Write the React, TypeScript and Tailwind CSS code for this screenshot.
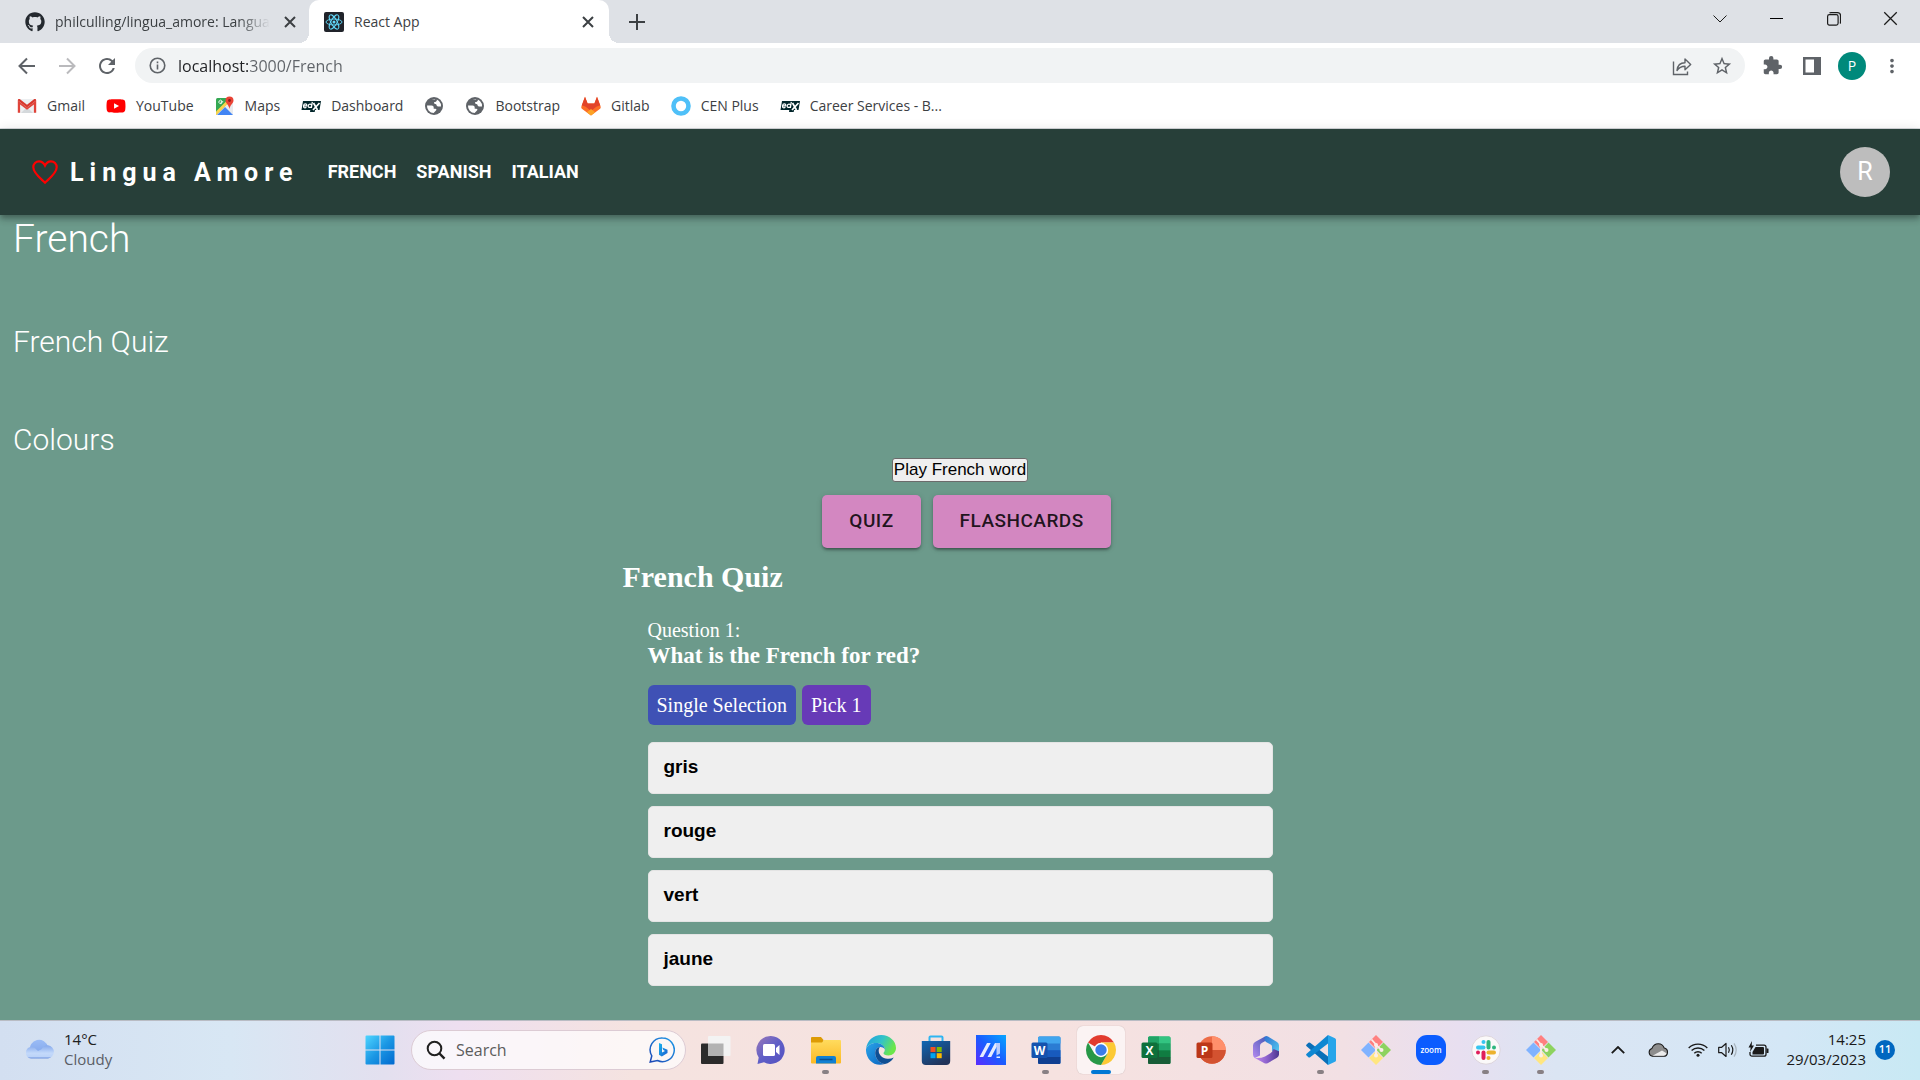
import React from "react";
import { FaGithub, FaYoutube } from "react-icons/fa";
import { MdExtension, MdMoreVert, MdRefresh, MdStarBorder } from "react-icons/md";

/* ---------- Browser icons ---------- */

function ReactLogo() {
  return (
    <svg viewBox="0 0 20 20" className="size-5">
      <rect width="20" height="20" rx="2" fill="#20232a" />
      <g fill="none" stroke="#61dafb" strokeWidth="0.9">
        <ellipse cx="10" cy="10" rx="8" ry="3" />
        <ellipse cx="10" cy="10" rx="8" ry="3" transform="rotate(60 10 10)" />
        <ellipse cx="10" cy="10" rx="8" ry="3" transform="rotate(120 10 10)" />
      </g>
      <circle cx="10" cy="10" r="1.5" fill="#61dafb" />
    </svg>
  );
}

function Cross({ className }: { className: string }) {
  return (
    <svg viewBox="0 0 12 12" className={className} fill="none" stroke="currentColor">
      <path d="M1 1l10 10M11 1L1 11" />
    </svg>
  );
}

function Arrow({ className }: { className: string }) {
  return (
    <svg viewBox="0 0 20 20" className={className} fill="none" stroke="currentColor" strokeWidth="2">
      <path d="M18 10H3M10 2.5L2.5 10l7.5 7.5" />
    </svg>
  );
}

function GmailIcon() {
  return (
    <svg viewBox="0 0 20 20" className="size-5">
      <rect x="1" y="3" width="18" height="14" rx="1.5" fill="#eceff1" />
      <path d="M4 17L10 11l6 6z" fill="#d5d9dc" />
      <path d="M0.8 16.8V4.4L10 11.4l9.200-7v12.400h-2.300V8.500L10 13.700 3.100 8.500v8.300z" fill="#e0443a" />
      <path d="M0.800 4.400C.8 3 2.200 2.700 3 3.300l7 5.500 7-5.500c.8-.6 2.200-.3 2.200 1.100L10 11.400z" fill="#d8372d" />
    </svg>
  );
}

function MapsIcon() {
  return (
    <svg viewBox="0 0 20 20" className="size-5">
      <rect x="1" y="2" width="17" height="17" rx="1.500" fill="#34a853" />
      <path d="M1 19L18 2v17z" fill="#e8eaed" />
      <path d="M2 19l8-8 8 8z" fill="#4285f4" />
      <path d="M1 15.500L12.500 4l2 2L1.500 19H1z" fill="#fbd34d" />
      <path d="M8.200 5.700H6v1h1.100A1.700 1.700 0 1 1 6.800 4.800" fill="none" stroke="#fff" strokeWidth="0.900" />
      <path d="M14.500 0.500a4 4 0 0 1 4 4c0 3-3.300 4-4 8.500-.7-4.500-4-5.500-4-8.500a4 4 0 0 1 4-4z" fill="#ea4335" />
      <circle cx="14.500" cy="4.500" r="1.400" fill="#8c1d18" />
    </svg>
  );
}

function EdxIcon() {
  return (
    <svg viewBox="0 0 20 20" className="size-5">
      <path d="M2 5h18l-1.500 9H14l-.3 2H9l.3-2H0.500z" fill="#02262b" />
      <g fill="none" stroke="#fff" strokeWidth="1.200">
        <path d="M2.500 9.800h3.300c.5-2.600-3-2.600-3.300 0-.3 2.200 1.600 2.400 2.900 1.500" />
        <path d="M11.300 5.800l-.9 6.200M10.700 9.600c-.2-2.200-3.300-1.800-3.500.3-.2 2 2.900 2.100 3.400.2" />
      </g>
      <path d="M12.500 7l4 7M18.500 7l-6.500 7" stroke="#fff" strokeWidth="1.700" />
    </svg>
  );
}

function GitlabIcon() {
  return (
    <svg viewBox="0 0 20 20" className="size-5">
      <path d="M4 .8L6.600 7.500h6.800L16 .8l3.600 9.700c.3.900 0 2-.8 2.600L10 19.500 1.200 13.100c-.8-.6-1.100-1.700-.8-2.600z" fill="#fc6d26" />
      <path d="M4 .8L6.600 7.500h6.800L16 .8l3.300 8.800c-2 .2-3.700 1-5 2L10 15l-4.300-3.400c-1.300-1-3-1.800-5-2z" fill="#e24329" />
      <path d="M5.700 16.300L10 13l4.300 3.300L10 19.500z" fill="#fca326" />
    </svg>
  );
}

function CenIcon() {
  return (
    <svg viewBox="0 0 20 20" className="size-5">
      <circle cx="10" cy="10" r="7.500" fill="none" stroke="#4fc0f8" strokeWidth="4.600" />
    </svg>
  );
}

function YoutubeIcon() {
  return <FaYoutube className="size-5 text-[#ff0000]" />;
}

function GlobeIcon() {
  return (
    <svg viewBox="0 0 20 20" className="size-5">
      <circle cx="10" cy="10" r="9" fill="#5f6368" />
      <path d="M3 9.500h4.500c1.500 0 2.200.8 2.200 2v1.200h1.600c1.200 0 1.400 1 .7 1.700L9.600 17A7 7 0 0 1 3 9.500z" fill="#fff" />
      <path d="M8 3.500c1.500-.7 3.500-.6 5 .2-.2 1.600-1.200 2.300-2.800 2.300-.4 1.800.4 2.200 2 2.200.3 1.700 1.200 2.400 2.600 2.400H17a7 7 0 0 0-2-5.600A7 7 0 0 0 8 3.500z" fill="#fff" />
    </svg>
  );
}

function HeartIcon() {
  return (
    <svg viewBox="0 0 24 22" className="h-6 w-[26px]" fill="none" stroke="#ff0000" strokeWidth="2">
      <path d="M12 20.800C9 17.800 1.200 12.400 1.200 6.700 1.200 3.600 3.600 1.200 6.500 1.200c2.400 0 4.400 1.500 5.500 3.800 1.100-2.300 3.100-3.800 5.500-3.800 2.900 0 5.300 2.400 5.300 5.500 0 5.700-7.800 11.100-10.800 14.100z" />
    </svg>
  );
}

/* ---------- Taskbar icons ---------- */

function StartIcon() {
  return (
    <svg viewBox="0 0 30 30" className="size-[30px]">
      <defs>
        <linearGradient id="start" x1="0" y1="0" x2="1" y2="1">
          <stop offset="0" stopColor="#4fd5ff" />
          <stop offset="0.5" stopColor="#1b97e4" />
          <stop offset="1" stopColor="#0069cf" />
        </linearGradient>
      </defs>
      <path d="M1.500.5H14.500V14.500H.5V1.500a1 1 0 0 1 1-1zM15.500.5H28.500a1 1 0 0 1 1 1V14.500H15.500zM.5 15.500H14.500V29.500H1.500a1 1 0 0 1-1-1zM15.500 15.500H29.500V28.500a1 1 0 0 1-1 1H15.500z" fill="url(#start)" />
    </svg>
  );
}

function TaskViewIcon() {
  return (
    <svg viewBox="0 0 30 30" className="size-[30px]">
      <rect x="0" y="8.500" width="22.500" height="20.500" rx="1" fill="#2b2b2b" />
      <rect x="7" y="1" width="22.500" height="20" rx="1" fill="#f3f3f3" />
      <rect x="7" y="8.500" width="15.500" height="12.500" fill="#b2b2b2" />
    </svg>
  );
}

function ChatIcon() {
  return (
    <svg viewBox="0 0 30 30" className="size-[30px]">
      <defs>
        <linearGradient id="chat" x1="0" y1="0" x2="1" y2="1">
          <stop offset="0" stopColor="#9a78b8" />
          <stop offset="0.5" stopColor="#5f5fc7" />
          <stop offset="1" stopColor="#5450c0" />
        </linearGradient>
      </defs>
      <path d="M15 1a14 14 0 1 1-7 26.300L1.500 29l1.200-6.500A14 14 0 0 1 15 1z" fill="url(#chat)" />
      <rect x="7" y="9" width="12" height="12" rx="1.500" fill="#fff" />
      <path d="M20 13l3.500-3v10L20 17z" fill="#fff" />
    </svg>
  );
}

function ExplorerIcon() {
  return (
    <svg viewBox="0 0 30 30" className="size-[30px]">
      <defs>
        <linearGradient id="folder" x1="0" y1="0" x2="0" y2="1">
          <stop offset="0" stopColor="#ffdb5e" />
          <stop offset="1" stopColor="#fbb924" />
        </linearGradient>
      </defs>
      <path d="M0 3a1 1 0 0 1 1-1h9l2.500 3V8H0z" fill="#dd9b05" />
      <path d="M0 7.500h11L13 5h16a1 1 0 0 1 1 1v21.500a1 1 0 0 1-1 1H1a1 1 0 0 1-1-1z" fill="url(#folder)" />
      <path d="M5 28.500V23a2 2 0 0 1 2-2h16a2 2 0 0 1 2 2v5.500z" fill="#1180d2" />
      <path d="M8.500 24.500h13" stroke="#0b4f8f" strokeWidth="1.500" />
    </svg>
  );
}

function EdgeIcon() {
  return (
    <svg viewBox="0 0 30 30" className="size-[30px]">
      <defs>
        <linearGradient id="edgeTop" x1="0" y1="0" x2="1" y2="0.400">
          <stop offset="0" stopColor="#1f9de0" />
          <stop offset="0.550" stopColor="#33c3c8" />
          <stop offset="1" stopColor="#6be64a" />
        </linearGradient>
        <linearGradient id="edgeLow" x1="0" y1="0" x2="1" y2="1">
          <stop offset="0" stopColor="#2aa5ea" />
          <stop offset="1" stopColor="#0a63bf" />
        </linearGradient>
      </defs>
      <path d="M0 14C1 5.500 7.500 0 15.200 0 23.500 0 30 6 30 13c0 4.500-3.500 7.500-7.500 7.500-3.200 0-5-1.200-5-2.300 0-.8 1.300-1.400 1.300-3.700C18.800 10.500 14.500 8 10 8 5 8 1.500 10.500 0 14z" fill="url(#edgeTop)" />
      <path d="M0 14c1.500-3.500 5-6 10-6 4.500 0 8.800 2.500 8.800 6.500-1-1.800-2.800-2.500-4.300-2.500-4 0-6 4-5 8.500 1 4.300 4.500 8 9.500 8.500C7.500 32.500-.5 23.500 0 14z" fill="url(#edgeLow)" />
      <path d="M14 12.100c-3.800.4-5.400 4.200-4.500 8.400 1 4.300 4.500 8 9.500 8.500 3.500-.7 6.800-3 8.700-6.500-2 1-4.200 1.500-6.300 1.200-4.900-.4-8.600-3.700-8.700-7.700 0-1.600.4-3 1.300-3.900z" fill="#0f4f94" />
    </svg>
  );
}

function StoreIcon() {
  return (
    <svg viewBox="0 0 30 30" className="size-[30px]">
      <defs>
        <linearGradient id="store" x1="0" y1="0" x2="0.600" y2="1">
          <stop offset="0" stopColor="#1067b4" />
          <stop offset="1" stopColor="#22345a" />
        </linearGradient>
      </defs>
      <path d="M8.500 7V2.500a1 1 0 0 1 1-1h11a1 1 0 0 1 1 1V7" fill="none" stroke="#2fb5f1" strokeWidth="2" />
      <path d="M.8 6h28.400v20a4 4 0 0 1-4 4H4.800a4 4 0 0 1-4-4z" fill="url(#store)" />
      <rect x="9.500" y="12" width="5" height="5" fill="#f25022" />
      <rect x="15.700" y="12" width="5" height="5" fill="#7fba00" />
      <rect x="9.500" y="18.200" width="5" height="5" fill="#00a4ef" />
      <rect x="15.700" y="18.200" width="5" height="5" fill="#ffb900" />
    </svg>
  );
}

function MyAsusIcon() {
  return (
    <svg viewBox="0 0 30 30" className="size-[30px]">
      <defs>
        <linearGradient id="asus" x1="0" y1="1" x2="1" y2="0">
          <stop offset="0" stopColor="#5a2bff" />
          <stop offset="0.500" stopColor="#1a5cff" />
          <stop offset="1" stopColor="#06a6ff" />
        </linearGradient>
      </defs>
      <rect width="30" height="30" fill="url(#asus)" />
      <path d="M3.500 22L11 8h3.700L7.200 22zM11.500 22L19 8h3.700l-7.500 14z" fill="#e6ecff" />
      <path d="M19.500 8H24v10.500l-3.500 2V12z" fill="#b9ccff" />
      <path d="M20.500 21.500h3.500v1.500h-3.500z" fill="#e6ecff" />
    </svg>
  );
}

function OfficeIcon({ letter, kind }: { letter: string; kind: "word" | "excel" | "powerpoint" }) {
  const tones = {
    word: ["#41a5ee", "#2b7cd3", "#185abd", "#103f91", "#1552ae"],
    excel: ["#33c481", "#21a366", "#107c41", "#185c37", "#0e703b"],
    powerpoint: ["#ff8f6b", "#ed6c47", "#d35230", "#c43e1c", "#bb3718"],
  }[kind];
  return (
    <svg viewBox="0 0 30 30" className="size-[30px]">
      {kind === "powerpoint" ? (
        <>
          <circle cx="16" cy="15" r="13.700" fill={tones[1]} />
          <path d="M16 1.300A13.700 13.700 0 0 1 29.700 15H16z" fill={tones[0]} />
          <path d="M2.300 15h27.400a13.700 13.700 0 0 1-27.400 0z" fill={tones[2]} />
        </>
      ) : (
        <>
          <rect x="7" y="1.500" width="22.500" height="27.500" rx="1.500" fill={tones[1]} />
          <path d="M7 3a1.500 1.500 0 0 1 1.500-1.500H28A1.500 1.500 0 0 1 29.500 3v5.500H7z" fill={tones[0]} />
          <rect x="7" y="15.200" width="22.500" height="7" fill={tones[2]} />
          <path d="M7 22h22.500v5.500A1.500 1.500 0 0 1 28 29H8.500A1.500 1.500 0 0 1 7 27.500z" fill={tones[3]} />
          {kind === "excel" && (
            <>
              <path d="M7 3a1.500 1.500 0 0 1 1.500-1.500H18v7H7z" fill="#21a366" />
              <rect x="7" y="8.500" width="11" height="6.700" fill="#107c41" />
              <rect x="18" y="8.500" width="11.500" height="6.700" fill="#21a366" />
              <rect x="7" y="15.200" width="11" height="6.800" fill="#185c37" />
            </>
          )}
        </>
      )}
      <rect x="0.500" y="7.500" width="16" height="15.500" rx="1.500" fill={tones[4]} />
      <text x="8.500" y="19.500" textAnchor="middle" fontSize="12" fontWeight="700" fontFamily="Open Sans, sans-serif" fill="#fff">
        {letter}
      </text>
    </svg>
  );
}

function ChromeIcon() {
  return (
    <svg viewBox="0 0 30 30" className="size-[30px]">
      <path d="M15 15L2.010 7.500A15 15 0 0 1 27.990 7.500H15z" fill="#e23b2e" />
      <path d="M15 15V7.500h12.990A15 15 0 0 1 15 30l6.500-11.250z" fill="#fcc934" />
      <path d="M15 15l6.500 3.750L15 30A15 15 0 0 1 2.010 7.500L8.500 18.750z" fill="#279847" />
      <circle cx="15" cy="15" r="7.200" fill="#fff" />
      <circle cx="15" cy="15" r="5.700" fill="#3b7de9" />
    </svg>
  );
}

function M365Icon() {
  return (
    <svg viewBox="0 0 30 30" className="size-[30px]">
      <defs>
        <linearGradient id="m365a" x1="0" y1="1" x2="1" y2="0">
          <stop offset="0" stopColor="#b48af0" />
          <stop offset="1" stopColor="#3f55b0" />
        </linearGradient>
        <linearGradient id="m365b" x1="0" y1="0" x2="1" y2="1">
          <stop offset="0" stopColor="#2f6fd0" />
          <stop offset="1" stopColor="#58d0f2" />
        </linearGradient>
        <linearGradient id="m365c" x1="0" y1="0" x2="1" y2="0">
          <stop offset="0" stopColor="#c48bf0" />
          <stop offset="0.500" stopColor="#8d62cc" />
          <stop offset="1" stopColor="#4c3690" />
        </linearGradient>
      </defs>
      <path d="M14 1.500L4 7Q2 8.200 2 10.500v9.300q0 2 1.800 3.200L9 20.500V11q0-2 1.700-3L18 4z" fill="url(#m365a)" />
      <path d="M14 1.500q1.500-1 3 0l9 5.500q2 1.200 2 3.500v9l-7-3.500v-4.500q0-1-1-1.800l-5-2.700q-3-2.500-1-5.500z" fill="url(#m365b)" />
      <path d="M3.800 23L13 28q2 1 4 0l9-5.200q2-1.200 2-3.300v-3.200l-5.500-2.300q-1 3-3.500 4.500l-5 3Q10 23.500 3.800 23z" fill="url(#m365c)" />
    </svg>
  );
}

function VsCodeIcon() {
  return (
    <svg viewBox="0 0 30 30" className="size-[30px]">
      <path d="M22 0L29 3.200a2 2 0 0 1 1 1.800v20a2 2 0 0 1-1 1.800L22 30z" fill="#27a5ea" />
      <path d="M22 30L.6 11.200a1.200 1.200 0 0 1 0-1.800l1.800-1.600a1.500 1.500 0 0 1 1.700-.1L22 21.500z" fill="#0a6fb8" />
      <path d="M22 0L.6 18.800a1.200 1.200 0 0 0 0 1.800l1.800 1.600a1.500 1.500 0 0 0 1.700.1L22 8.500z" fill="#0f87d2" />
    </svg>
  );
}

function GitBashIcon() {
  return (
    <svg viewBox="0 0 30 30" className="size-[30px]">
      <path d="M15 0l7 7-7 7-7-7z" fill="#ff8080" />
      <path d="M7.500 7.500L14 14v2l-6.500 6.500L0 15z" fill="#80b3ff" />
      <path d="M22.500 7.500L30 15l-7.500 7.500L15.500 15z" fill="#8dd35f" />
      <path d="M15 16l7 7-7 7-7-7z" fill="#ffe680" />
      <g stroke="#fbeeea" strokeWidth="1.800" fill="none">
        <path d="M10.500 4.500L15 9.500V21M15 10l5.500 5" />
      </g>
      <circle cx="15" cy="10" r="2" fill="#fbeeea" />
      <circle cx="20.500" cy="15" r="2" fill="#fbeeea" />
      <circle cx="15" cy="20.500" r="2" fill="#fbeeea" />
    </svg>
  );
}

function ZoomIcon() {
  return (
    <svg viewBox="0 0 30 30" className="size-[30px]">
      <rect width="30" height="30" rx="11" fill="#0b5cff" />
      <text x="15" y="17.500" textAnchor="middle" fontSize="8" fontWeight="600" fontFamily="Open Sans, sans-serif" fill="#fff">
        zoom
      </text>
    </svg>
  );
}

function SlackIcon() {
  return (
    <svg viewBox="0 0 30 30" className="size-[30px]">
      <circle cx="15" cy="15" r="14.200" fill="#fbf9f9" stroke="#d8cfd6" strokeWidth="0.800" />
      <g strokeWidth="4" strokeLinecap="round">
        <path d="M7 12.500h5.500" stroke="#36c5f0" />
        <path d="M17.500 7v5.500" stroke="#2eb67d" />
        <path d="M17.500 17.500H23" stroke="#ecb22e" />
        <path d="M12.500 17.500V23" stroke="#e01e5a" />
      </g>
      <circle cx="12.500" cy="7" r="2" fill="#36c5f0" />
      <circle cx="23" cy="12.500" r="2" fill="#2eb67d" />
      <circle cx="17.500" cy="23" r="2" fill="#ecb22e" />
      <circle cx="7" cy="17.500" r="2" fill="#e01e5a" />
    </svg>
  );
}

function BingIcon() {
  return (
    <svg viewBox="0 0 26 26" className="size-[26px]" fill="none">
      <defs>
        <linearGradient id="bing" x1="1" y1="0" x2="0" y2="1">
          <stop offset="0" stopColor="#1e9be8" />
          <stop offset="1" stopColor="#1d47b5" />
        </linearGradient>
        <linearGradient id="bingB" x1="0" y1="0" x2="1" y2="1">
          <stop offset="0" stopColor="#18b4ee" />
          <stop offset="1" stopColor="#1c5fd0" />
        </linearGradient>
      </defs>
      <path d="M13.500 1a11.800 11.800 0 1 1-5 22.500L1.200 25l1.600-6.200A11.800 11.800 0 0 1 13.500 1z" stroke="url(#bing)" strokeWidth="1.500" />
      <path d="M10 6l3 1.200v8.300l3-1.600-1.700-.8-1-2.600 5.200 2.200v3.200L12.800 19.500 10 17.800z" fill="url(#bingB)" />
    </svg>
  );
}

function CloudWeatherIcon() {
  return (
    <svg viewBox="0 0 30 20" className="h-5 w-[30px]">
      <defs>
        <linearGradient id="cloudBack" x1="0" y1="0" x2="0" y2="1">
          <stop offset="0" stopColor="#9bbcf6" />
          <stop offset="1" stopColor="#7fa4ea" />
        </linearGradient>
        <linearGradient id="cloudFront" x1="0" y1="0" x2="0" y2="1">
          <stop offset="0" stopColor="#84a8ec" />
          <stop offset="0.600" stopColor="#c3d9fa" />
          <stop offset="0.850" stopColor="#bcd3f8" />
          <stop offset="1" stopColor="#6a90de" />
        </linearGradient>
      </defs>
      <path d="M5 12a8.700 8.700 0 0 1 18-4L20 17H7z" fill="url(#cloudBack)" />
      <path d="M6 19.500a5.800 5.800 0 0 1 0-11.500c2.500 0 4 .8 5 2.300l2 1.700 3.500-1.800c1.500-2.600 3.800-4 6.500-4a6.700 6.700 0 0 1 0 13.300z" fill="url(#cloudFront)" />
    </svg>
  );
}

/* ---------- Data ---------- */

const bookmarks: { label: string; icon: React.ReactNode }[] = [
  { label: "Gmail", icon: <GmailIcon /> },
  { label: "YouTube", icon: <YoutubeIcon /> },
  { label: "Maps", icon: <MapsIcon /> },
  { label: "Dashboard", icon: <EdxIcon /> },
  { label: "", icon: <GlobeIcon /> },
  { label: "Bootstrap", icon: <GlobeIcon /> },
  { label: "Gitlab", icon: <GitlabIcon /> },
  { label: "CEN Plus", icon: <CenIcon /> },
  { label: "Career Services - B...", icon: <EdxIcon /> },
];

const answers = ["gris", "rouge", "vert", "jaune"];

type TaskbarApp = { name: string; icon: React.ReactNode; running?: boolean; active?: boolean };

const pinned: TaskbarApp[] = [
  { name: "Task view", icon: <TaskViewIcon /> },
  { name: "Chat", icon: <ChatIcon /> },
  { name: "File Explorer", icon: <ExplorerIcon />, running: true },
  { name: "Edge", icon: <EdgeIcon /> },
  { name: "Store", icon: <StoreIcon /> },
  { name: "MyASUS", icon: <MyAsusIcon /> },
  { name: "Word", icon: <OfficeIcon letter="W" kind="word" />, running: true },
  { name: "Chrome", icon: <ChromeIcon />, active: true },
  { name: "Excel", icon: <OfficeIcon letter="X" kind="excel" /> },
  { name: "PowerPoint", icon: <OfficeIcon letter="P" kind="powerpoint" /> },
  { name: "Microsoft 365", icon: <M365Icon /> },
  { name: "Visual Studio Code", icon: <VsCodeIcon />, running: true },
  { name: "Git GUI", icon: <GitBashIcon /> },
  { name: "Zoom", icon: <ZoomIcon /> },
  { name: "Slack", icon: <SlackIcon />, running: true },
  { name: "Git Bash", icon: <GitBashIcon />, running: true },
];

/* ---------- Sections ---------- */

function TabStrip() {
  return (
    <div className="flex h-[43px] items-stretch bg-[#dee1e6] text-[#3c4043]">
      <div className="flex w-[309px] items-center pr-[13px] pl-[25px]">
        <FaGithub className="size-5 shrink-0 text-[#24292f]" />
        <span className="ml-2.5 text-sm whitespace-nowrap [mask-image:linear-gradient(to_right,black_85%,transparent)]">
          philculling/lingua_amore: Langua
        </span>
        <button aria-label="Close tab" className="ml-auto">
          <Cross className="size-3 stroke-2" />
        </button>
      </div>
      <div className="relative flex w-[300px] items-center gap-2.5 rounded-t-[10px] bg-white pr-[15px] pl-[15px]">
        <span className="absolute bottom-0 -left-2.5 size-2.5 bg-[radial-gradient(circle_at_0_0,transparent_10px,white_10px)]" />
        <span className="absolute -right-2.5 bottom-0 size-2.5 bg-[radial-gradient(circle_at_100%_0,transparent_10px,white_10px)]" />
        <ReactLogo />
        <span className="flex-1 text-sm">React App</span>
        <button aria-label="Close tab">
          <Cross className="size-3 stroke-2" />
        </button>
      </div>
      <button aria-label="New tab" className="ml-5 self-center">
        <svg viewBox="0 0 16 16" className="size-4 stroke-2" fill="none" stroke="currentColor">
          <path d="M8 0v16M0 8h16" />
        </svg>
      </button>
      <div className="mr-px mb-1.5 ml-auto flex items-center text-[#1b1b1b]">
        <button aria-label="Search tabs" className="grid w-[57px] place-items-center">
          <svg viewBox="0 0 14 8" className="h-2 w-3.5" fill="none" stroke="currentColor">
            <path d="M.5.500l6.500 6.500L13.500.5" />
          </svg>
        </button>
        <button aria-label="Minimise" className="grid h-3.5 w-[57px] place-items-center">
          <span className="h-px w-[13px] bg-black" />
        </button>
        <button aria-label="Restore" className="grid w-[57px] place-items-center">
          <svg viewBox="0 0 14 14" className="size-3.5" fill="none" stroke="currentColor" strokeWidth="1.200">
            <rect x="0.600" y="2.600" width="10.500" height="10.500" rx="1.800" />
            <path d="M2.500 1q.5-.4 1.500-.4h6.500a3 3 0 0 1 3 3V10q0 1-.5 1.500" />
          </svg>
        </button>
        <button aria-label="Close" className="grid w-[57px] place-items-center">
          <Cross className="size-[15px]" />
        </button>
      </div>
    </div>
  );
}

function Toolbar() {
  return (
    <div className="flex items-center bg-white pt-[5px] pr-2 pl-[17px] text-[#5f6368]">
      <div className="flex w-[118px] items-center gap-5">
        <button aria-label="Back"><Arrow className="size-5" /></button>
        <button aria-label="Forward" className="rotate-180 text-[#bababd]"><Arrow className="size-5" /></button>
        <button aria-label="Reload"><MdRefresh className="-mx-0.5 size-6" /></button>
      </div>
      <div className="flex h-[35px] flex-1 items-center rounded-full bg-[#f1f3f4] pr-3 pl-3.5">
        <svg viewBox="0 0 18 18" className="size-[17px]" fill="none" stroke="currentColor" strokeWidth="1.700">
          <circle cx="9" cy="9" r="7.700" />
          <path d="M9 8v5.200M9 4.700v1.900" />
        </svg>
        <input
          aria-label="Address"
          defaultValue="localhost:3000/French"
          className="ml-3 flex-1 bg-[linear-gradient(to_right,#202124_71px,#5f6368_71px)] bg-clip-text text-base text-[#5f6368] outline-none [-webkit-text-fill-color:transparent]"
        />
        <div className="flex items-center gap-[19px]">
          <button aria-label="Share">
            <svg viewBox="0 0 20 20" className="size-5" fill="none" stroke="currentColor" strokeWidth="1.400">
              <path d="M1.500 5.500v13h14v-3" />
              <path d="M5 14.500c.5-5 3.500-7.700 8-7.700V3l5.700 5.500-5.700 5.300V10.300c-3.500 0-6 1.200-8 4.200z" strokeLinejoin="round" />
            </svg>
          </button>
          <button aria-label="Bookmark"><MdStarBorder className="size-[22px]" /></button>
        </div>
      </div>
      <div className="ml-[7px] flex items-center">
        <button aria-label="Extensions" className="grid w-10 place-items-center"><MdExtension className="size-[21px]" /></button>
        <button aria-label="Side panel" className="grid w-10 place-items-center">
          <svg viewBox="0 0 18 18" className="size-[18px]">
            <path d="M0 0h18v18H0zM2.500 2.500v13h8.500v-13z" fill="currentColor" fillRule="evenodd" />
          </svg>
        </button>
        <button aria-label="Profile" className="mx-1.5 grid size-7 place-items-center rounded-full bg-[#00897b] text-sm text-white">P</button>
        <button aria-label="Menu" className="grid w-10 place-items-center"><MdMoreVert className="size-[22px]" /></button>
      </div>
    </div>
  );
}

function Bookmarks() {
  return (
    <nav className="flex h-[46px] items-center gap-[21px] border-b border-[#d5d8dc] bg-white px-[17px] text-sm text-[#3c4043]">
      {bookmarks.map((b, i) => (
        <a key={i} href="#" aria-label={b.label || "Bookmark"} className="flex items-center gap-2.5 whitespace-nowrap">
          {b.icon}
          {b.label && <span>{b.label}</span>}
        </a>
      ))}
    </nav>
  );
}

function SiteHeader() {
  return (
    <header className="relative flex h-[86px] items-center bg-[#273f39] px-[30px] font-[Roboto,sans-serif] text-white shadow-[0_3px_5px_-1px_rgba(0,0,0,0.2),0_5px_6px_0_rgba(0,0,0,0.14),0_1px_12px_0_rgba(0,0,0,0.12)]">
      <a href="#" className="ml-0.5 flex items-center gap-3">
        <HeartIcon />
        <span className="pt-0.5 text-[25px] leading-10 font-bold tracking-[6px]">Lingua Amore</span>
      </a>
      <nav className="ml-[29px] flex gap-5 text-lg font-bold">
        <a href="#">FRENCH</a>
        <a href="#">SPANISH</a>
        <a href="#">ITALIAN</a>
      </nav>
      <button aria-label="Account" className="ml-auto grid size-[50px] place-items-center rounded-full bg-[#bdbdbd] text-[25px]">
        R
      </button>
    </header>
  );
}

function Page() {
  return (
    <main className="flex-1 bg-[#6c9a8b] pb-[34px] text-white">
      <div className="flex flex-col gap-[62px] pt-px pl-[13px] font-[Roboto,sans-serif] font-light">
        <h1 className="text-[39px] leading-[46px]">French</h1>
        <h2 className="text-[30px] leading-9">French Quiz</h2>
        <h2 className="text-[30px] leading-9">Colours</h2>
      </div>
      <div className="flex flex-col items-center gap-[13px]">
        <button className="h-6 rounded-[3px] border border-[#6b6b6b] bg-[#efefef] px-px font-['Liberation_Sans',sans-serif] text-[17px] leading-[22px] text-black">
          Play French word
        </button>
        <div className="ml-[13px] flex gap-3 font-[Roboto,sans-serif] text-[19px] font-medium tracking-wide text-black/85">
          <button className="h-[53px] rounded-[5px] bg-[#d387c1] px-[27px] shadow-[0_3px_3px_-2px_rgba(0,0,0,0.3),0_2px_3px_rgba(0,0,0,0.2),0_1px_6px_rgba(0,0,0,0.12)]">
            QUIZ
          </button>
          <button className="h-[53px] rounded-[5px] bg-[#d387c1] px-[27px] shadow-[0_3px_3px_-2px_rgba(0,0,0,0.3),0_2px_3px_rgba(0,0,0,0.2),0_1px_6px_rgba(0,0,0,0.12)]">
            FLASHCARDS
          </button>
        </div>
      </div>
      <section className="mx-auto mt-3 w-full max-w-[675px] font-['Liberation_Serif',serif] text-xl">
        <h2 className="text-[30px] leading-[34px] font-bold">French Quiz</h2>
        <div className="mt-6 px-[25px]">
          <div className="leading-6">Question 1:</div>
          <h3 className="text-[23px] leading-7 font-bold">What is the French for red?</h3>
          <div className="mt-[15px] flex gap-1.5 leading-10">
            <span className="rounded-md bg-[#3f51b5] px-[9px]">Single Selection</span>
            <span className="rounded-md bg-[#673ab7] px-[9px]">Pick 1</span>
          </div>
          <div className="mt-[17px] flex flex-col gap-3">
            {answers.map((a) => (
              <button
                key={a}
                className="h-[52px] rounded-[5px] border border-[#e4e4e4] bg-[#efefef] px-[15px] pb-0.5 text-left font-['Liberation_Sans',sans-serif] text-[19px] font-bold text-black"
              >
                {a}
              </button>
            ))}
          </div>
        </div>
      </section>
    </main>
  );
}

function Taskbar() {
  return (
    <footer className="grid h-[60px] grid-cols-[1fr_auto_1fr] items-center border-t border-[#b9bcc4] bg-[linear-gradient(to_right,#d3dff1,#d8e7f4_12%,#e3e0ef_20%,#eedff0_24%,#f5e3e0_33%,#f6e2e0_55%,#f2e0e4_70%,#e8dff0_76%,#dbe5f3_81%,#d4e7f6_93%,#c8e9f4)] pb-0.5">
      <button className="flex items-center gap-[9px] pb-0.5 pl-[25px] text-left text-[15px] leading-5 text-[#202020]">
        <CloudWeatherIcon />
        <span>
          <span className="block">14°C</span>
          <span className="block text-[#5a5e66]">Cloudy</span>
        </span>
      </button>
      <div className="flex items-center">
        <button aria-label="Start" className="grid w-[55px] place-items-center"><StartIcon /></button>
        <label className="mr-0.5 ml-1 flex h-10 w-[275px] items-center rounded-full border border-[#dccbd4] bg-white/70 pr-2.5 pl-3.5">
          <svg viewBox="0 0 20 20" className="size-5" fill="none" stroke="#202020" strokeWidth="2">
            <circle cx="8.500" cy="8.500" r="6.800" />
            <path d="M13.500 13.500l5 5.200" strokeWidth="2.500" />
          </svg>
          <input aria-label="Search" placeholder="Search" className="mx-2.5 min-w-0 flex-1 text-base outline-none placeholder:text-[#5c5c5c]" />
          <BingIcon />
        </label>
        {pinned.map((app) => (
          <button key={app.name} aria-label={app.name} className="grid w-[55px] place-items-center">
            <span className={app.active ? "relative grid size-12 place-items-center rounded-md bg-white/60 shadow-[0_0_1px_rgba(0,0,0,0.3)]" : "relative grid size-12 place-items-center"}>
              {app.icon}
              {app.running && <span className="absolute bottom-0 h-1 w-[7px] rounded-full bg-[#888084]" />}
              {app.active && <span className="absolute bottom-0 h-1 w-5 rounded-full bg-[#0078d4]" />}
            </span>
          </button>
        ))}
      </div>
      <div className="flex items-center justify-end pr-[25px] text-[#1a1a1a]">
        <button aria-label="Show hidden icons">
          <svg viewBox="0 0 14 8" className="h-2 w-3.5" fill="none" stroke="currentColor" strokeWidth="1.800">
            <path d="M.8 7.200L7 1l6.200 6.200" />
          </svg>
        </button>
        <button aria-label="OneDrive" className="ml-[23px]">
          <svg viewBox="0 0 20 14" className="h-3.5 w-5" strokeWidth="1.100">
            <path d="M4.500 13.300a4 4 0 0 1-.7-7.700C5 2.500 7.500.7 10.300.7c3 0 5 1.700 5.900 4.300a4.200 4.200 0 0 1-.7 8.300z" fill="#8d8d8d" stroke="#1a1a1a" />
            <path d="M4.500 12.700L14 7.500l4.500 2.700a3 3 0 0 1-2.800 2.500z" fill="#ececec" />
          </svg>
        </button>
        <button aria-label="Network and sound" className="ml-5 flex items-center gap-2.5">
          <svg viewBox="0 0 20 15" className="h-[15px] w-5" fill="none" stroke="currentColor" strokeWidth="1.400">
            <path d="M.7 6a13 13 0 0 1 18.600 0M3.600 8.600a9.200 9.200 0 0 1 12.800 0M6.300 11.200a5.300 5.300 0 0 1 7.400 0" />
            <circle cx="10" cy="13.200" r="1.500" fill="currentColor" stroke="none" />
          </svg>
          <svg viewBox="0 0 20 16" className="h-4 w-5" fill="none" stroke="currentColor" strokeWidth="1.200">
            <path d="M.7 5.300h3L8 1.500v13l-4.300-3.800h-3z" strokeLinejoin="round" />
            <path d="M10.500 5.300q1.600 2.700 0 5.400M13.300 3.300q3 4.700 0 9.400" />
            <path d="M16 1.300q4.400 6.700 0 13.400" stroke="#a9b4bd" />
          </svg>
          <svg viewBox="0 0 21 17" className="h-[17px] w-[21px]" fill="none" stroke="currentColor" strokeWidth="1.300">
            <path d="M8 4.200h8a2 2 0 0 1 2 2v7a2 2 0 0 1-2 2H4a2 2 0 0 1-2-2V11" />
            <path d="M7.500 6H15a1 1 0 0 1 1 1v5.500a1 1 0 0 1-1 1H4.500V11z" fill="currentColor" stroke="none" />
            <path d="M18.500 7.500H20a.5.500 0 0 1 .5.500v3.500a.5.500 0 0 1-.5.500h-1.500z" fill="currentColor" stroke="none" />
            <path d="M4 0L.5 6.500h2.200L2 11l4-6.500H3.700z" fill="currentColor" stroke="none" />
          </svg>
        </button>
        <button className="ml-[17px] pb-0.5 text-right text-[15px] leading-5">
          <span className="block">14:25</span>
          <span className="block">29/03/2023</span>
        </button>
        <button aria-label="Notifications" className="ml-[9px] grid size-5 place-items-center rounded-full bg-[#0067c0] text-[11px] font-semibold text-white">
          11
        </button>
      </div>
    </footer>
  );
}

export default function App() {
  return (
    <div className="flex min-h-screen flex-col font-['Open_Sans',sans-serif]">
      <TabStrip />
      <Toolbar />
      <Bookmarks />
      <SiteHeader />
      <Page />
      <Taskbar />
    </div>
  );
}
